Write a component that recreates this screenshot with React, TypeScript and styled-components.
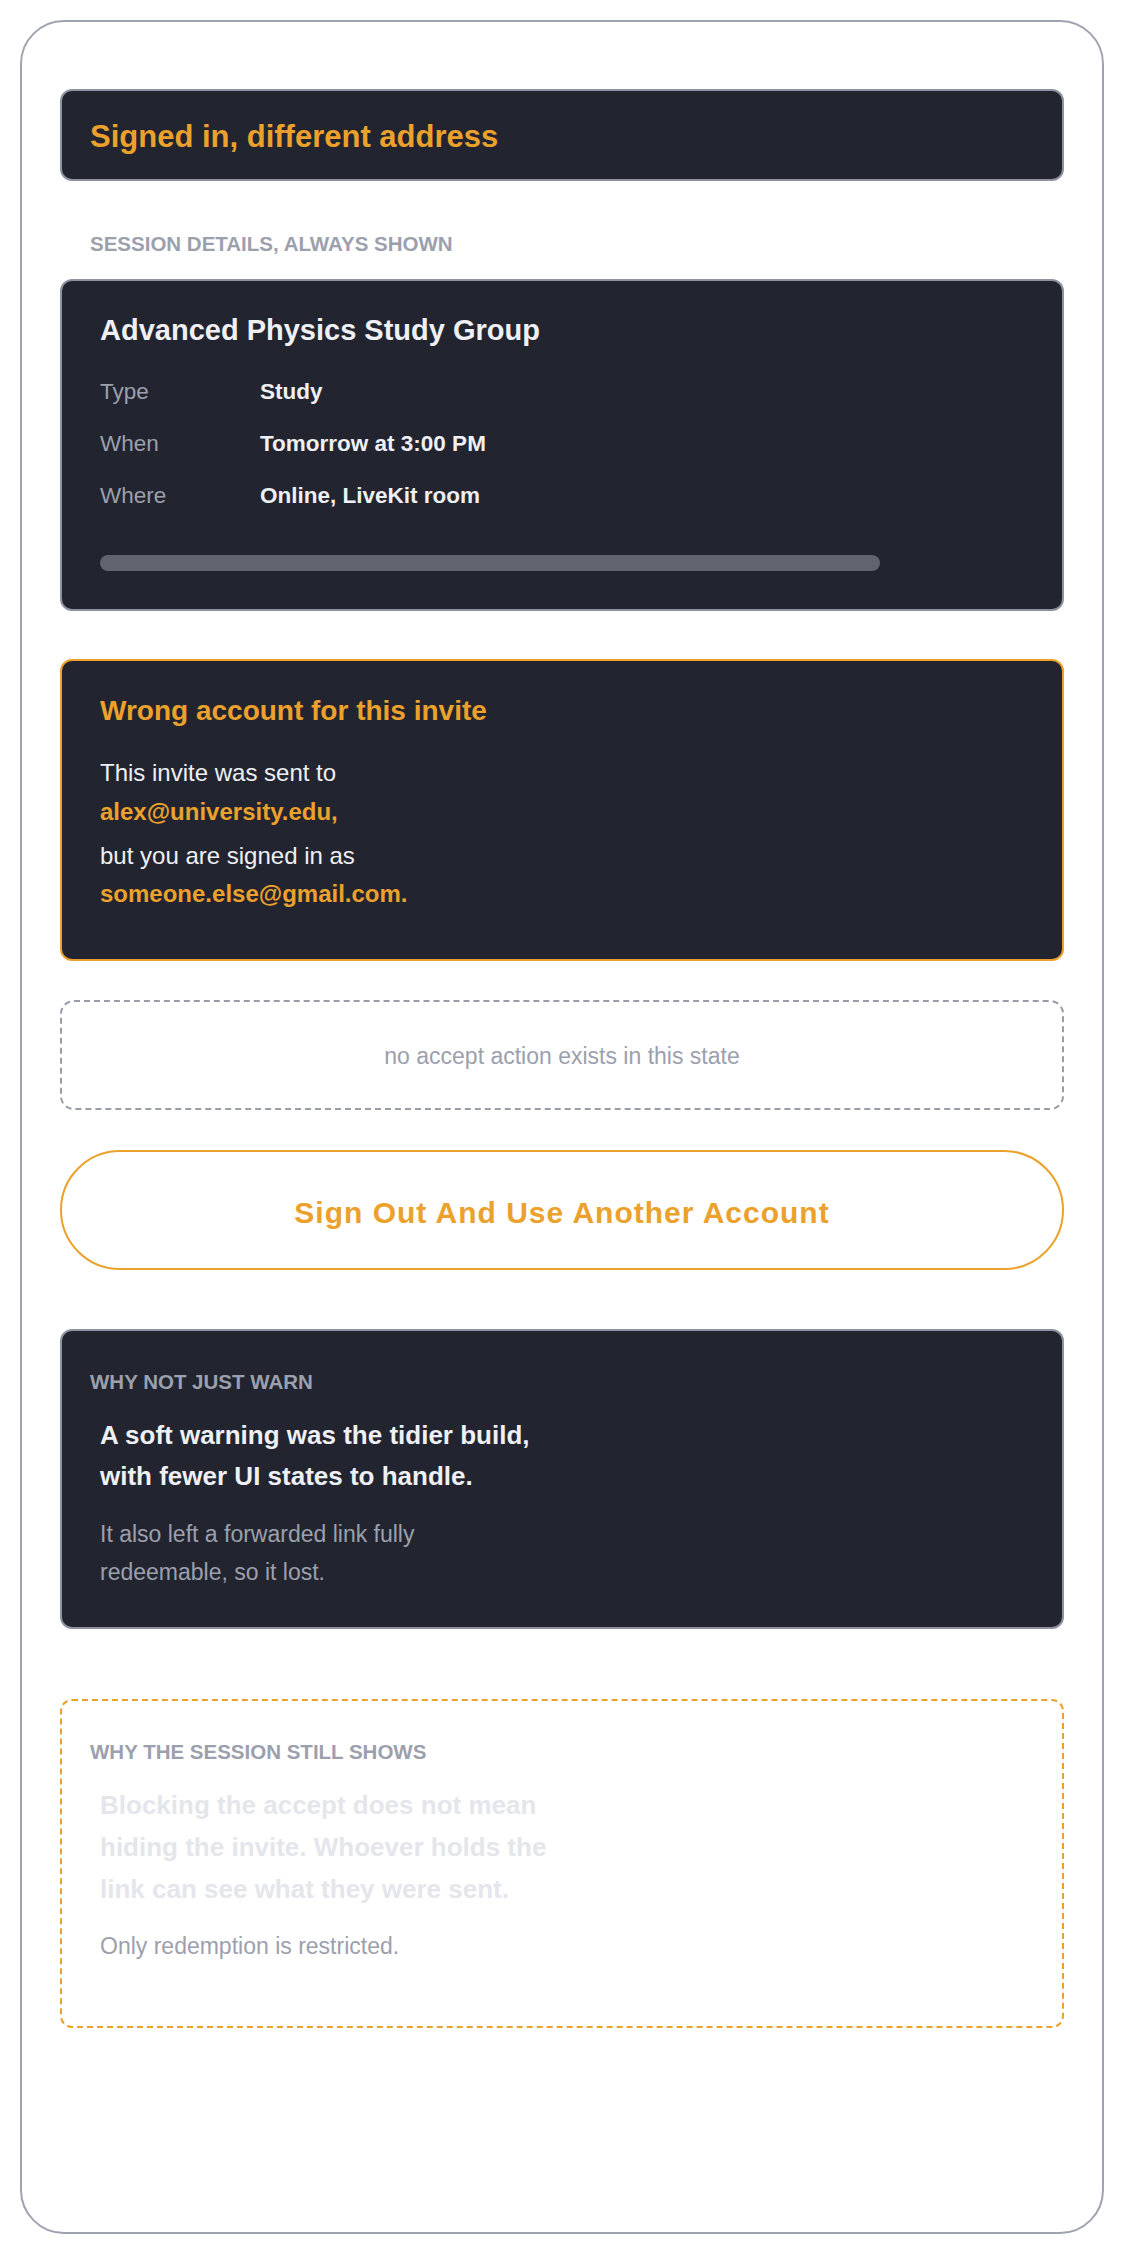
import React from 'react';
import styled, { createGlobalStyle, css } from 'styled-components';

const ORANGE = '#eba12c';
const INK = '#222530';
const MUTED = '#9ca0ad';
const EDGE = '#8f93a1';
const TEXT = '#eff0f4';

const GlobalStyle = createGlobalStyle`
  html, body {
    margin: 0;
    padding: 0;
    background: #ffffff;
  }

  body {
    font-family: "Liberation Sans", Arial, Helvetica, sans-serif;
    -webkit-font-smoothing: antialiased;
  }

  *, *::before, *::after {
    box-sizing: border-box;
  }
`;

const Page = styled.div`
  padding: 20px;
`;

const Frame = styled.main`
  min-height: calc(100vh - 40px);
  border: 2px solid #9fa3af;
  border-radius: 44px;
  padding: 67px 38px 80px;
  display: flex;
  flex-direction: column;
`;

const StateBar = styled.header`
  background: ${INK};
  border: 2px solid ${EDGE};
  border-radius: 12px;
  padding: 28px 28px 24px;
`;

const StateTitle = styled.h1`
  margin: 0;
  font-size: 31px;
  line-height: 36px;
  font-weight: 700;
  color: ${ORANGE};
`;

const Eyebrow = styled.div`
  font-size: 20.5px;
  line-height: 24px;
  font-weight: 700;
  text-transform: uppercase;
  color: ${MUTED};
`;

const SectionLabel = styled(Eyebrow)`
  margin: 51px 0 23px 30px;
`;

type Tone = 'dark' | 'alert' | 'note';

const Card = styled.section<{ $tone: Tone; $gap?: number }>`
  margin-top: ${(p) => p.$gap ?? 0}px;
  border-radius: 12px;
  ${(p) =>
    p.$tone === 'dark' &&
    css`
      background: ${INK};
      border: 2px solid ${EDGE};
    `}
  ${(p) =>
    p.$tone === 'alert' &&
    css`
      background: ${INK};
      border: 2px solid ${ORANGE};
    `}
  ${(p) =>
    p.$tone === 'note' &&
    css`
      background: #ffffff;
      border: 2px dashed ${ORANGE};
    `}
`;

const SessionBody = styled.div`
  padding: 32px 38px 38px;
`;

const CardTitle = styled.h2<{ $size: number; $accent?: boolean }>`
  margin: 0;
  font-size: ${(p) => p.$size}px;
  line-height: 1.2;
  font-weight: 700;
  color: ${(p) => (p.$accent ? ORANGE : TEXT)};
`;

const Facts = styled.dl`
  margin: 27px 0 0;
  display: grid;
  grid-template-columns: 160px 1fr;
  row-gap: 18.25px;
  font-size: 22.5px;
  line-height: 1.5;
`;

const FactLabel = styled.dt`
  color: ${MUTED};
`;

const FactValue = styled.dd`
  margin: 0;
  font-weight: 700;
  color: ${TEXT};
`;

const Track = styled.div`
  margin-top: 42px;
  height: 16px;
  border-radius: 8px;
  background: #60646f;
`;

const AlertBody = styled.div`
  padding: 33px 38px 45px;
`;

const AlertText = styled.p`
  margin: 27px 0 0;
  max-width: 18em;
  font-size: 24px;
  line-height: 1.6;
  color: ${TEXT};

  & + & {
    margin-top: 6px;
  }
`;

const Email = styled.strong`
  color: ${ORANGE};
`;

const EmptySlot = styled.div`
  margin-top: 39px;
  height: 110px;
  padding-top: 4px;
  border: 2px dashed #9a9da8;
  border-radius: 14px;
  display: flex;
  align-items: center;
  justify-content: center;
  font-size: 23px;
  color: ${MUTED};
`;

const SwitchButton = styled.button`
  margin-top: 40px;
  height: 120px;
  width: 100%;
  padding: 6px 0 0;
  border: 2px solid ${ORANGE};
  border-radius: 999px;
  background: #ffffff;
  font-family: inherit;
  font-size: 30px;
  font-weight: 700;
  letter-spacing: 1px;
  color: ${ORANGE};
  cursor: pointer;
`;

const ReasonBody = styled.div<{ $bottom: number }>`
  padding: 39px 28px ${(p) => p.$bottom}px;
`;

const Lead = styled.p<{ $faint?: boolean }>`
  margin: 21px 0 0;
  padding-left: 10px;
  max-width: calc(18em + 10px);
  font-size: 26px;
  line-height: 1.6;
  font-weight: 700;
  color: ${(p) => (p.$faint ? '#e4e6eb' : TEXT)};
`;

const Aside = styled.p`
  margin: 17px 0 0;
  padding-left: 10px;
  max-width: calc(18em + 10px);
  font-size: 23px;
  line-height: 1.665;
  color: ${MUTED};
`;

const facts = [
  { label: 'Type', value: 'Study' },
  { label: 'When', value: 'Tomorrow at 3:00 PM' },
  { label: 'Where', value: 'Online, LiveKit room' },
];

export default function App() {
  return (
    <Page>
      <GlobalStyle />
      <Frame>
        <StateBar>
          <StateTitle>Signed in, different address</StateTitle>
        </StateBar>

        <SectionLabel>Session details, always shown</SectionLabel>

        <Card $tone="dark">
          <SessionBody>
            <CardTitle $size={29}>Advanced Physics Study Group</CardTitle>
            <Facts>
              {facts.map((f) => (
                <React.Fragment key={f.label}>
                  <FactLabel>{f.label}</FactLabel>
                  <FactValue>{f.value}</FactValue>
                </React.Fragment>
              ))}
            </Facts>
            <Track style={{ width: '84.4%' }} />
          </SessionBody>
        </Card>

        <Card $tone="alert" $gap={48}>
          <AlertBody>
            <CardTitle $size={28} $accent>
              Wrong account for this invite
            </CardTitle>
            <AlertText>
              This invite was sent to <Email>alex@university.edu,</Email>
            </AlertText>
            <AlertText>
              but you are signed in as <Email>someone.else@gmail.com.</Email>
            </AlertText>
          </AlertBody>
        </Card>

        <EmptySlot>no accept action exists in this state</EmptySlot>

        <SwitchButton type="button">Sign Out And Use Another Account</SwitchButton>

        <Card $tone="dark" $gap={59}>
          <ReasonBody $bottom={36}>
            <Eyebrow>Why not just warn</Eyebrow>
            <Lead>A soft warning was the tidier build, with fewer UI states to handle.</Lead>
            <Aside>It also left a forwarded link fully redeemable, so it lost.</Aside>
          </ReasonBody>
        </Card>

        <Card $tone="note" $gap={70}>
          <ReasonBody $bottom={60}>
            <Eyebrow>Why the session still shows</Eyebrow>
            <Lead $faint>
              Blocking the accept does not mean hiding the invite. Whoever holds the link can see
              what they were sent.
            </Lead>
            <Aside>Only redemption is restricted.</Aside>
          </ReasonBody>
        </Card>
      </Frame>
    </Page>
  );
}
